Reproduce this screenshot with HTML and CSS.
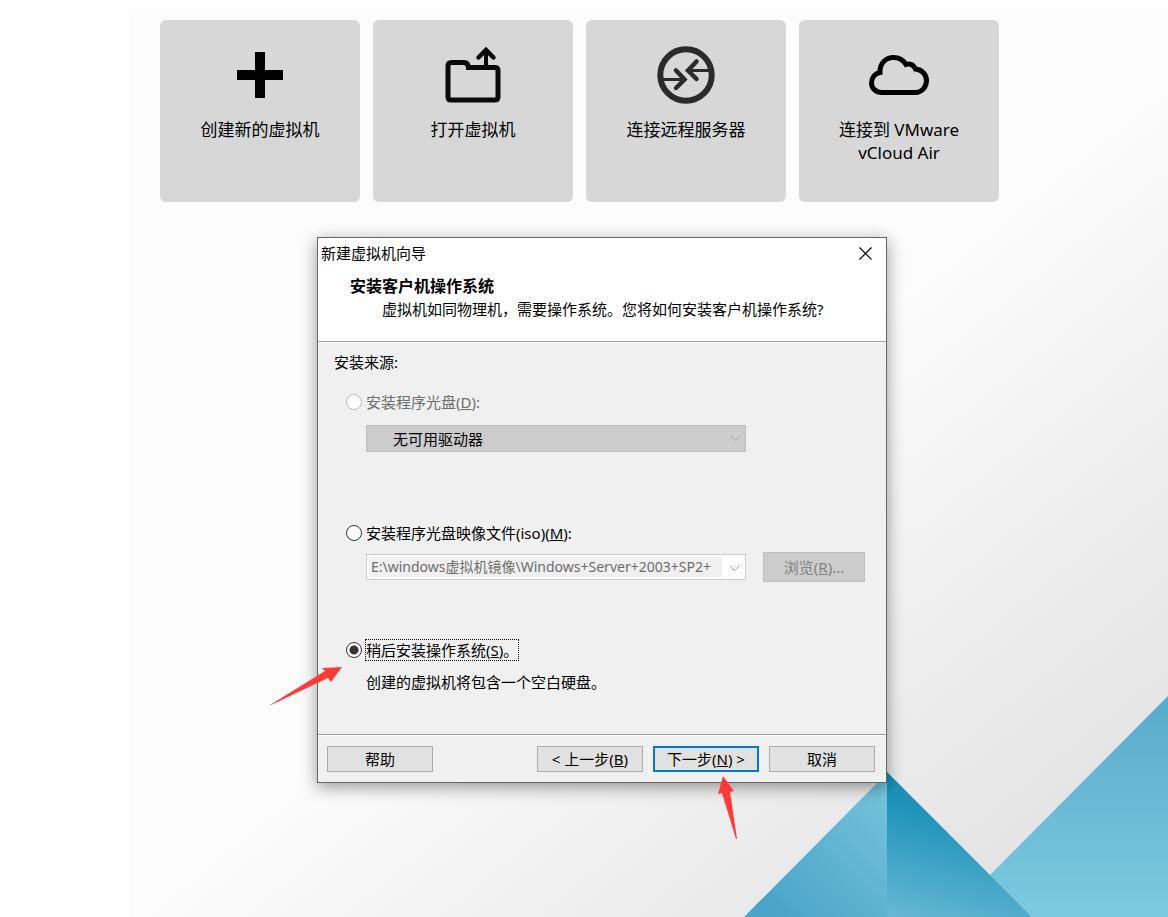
FILE: index.html
```html
<!DOCTYPE html>
<html lang="zh-CN">
<head>
    <meta charset="UTF-8">
    <title>新建虚拟机向导</title>
    <link rel="stylesheet" href="styles.css">
</head>
<body>
<div class="desktop">
    <svg class="bg" width="424" height="221" viewBox="0 0 424 221" aria-hidden="true">
        <defs>
            <linearGradient id="g1" x1="1" y1="0" x2="0" y2="1">
                <stop offset="0" stop-color="#78c5dc"/>
                <stop offset="0.9" stop-color="#4aa4c8"/>
            </linearGradient>
            <linearGradient id="g2" x1="0.35" y1="0" x2="0.1" y2="1">
                <stop offset="0.1" stop-color="#168db5"/>
                <stop offset="0.3" stop-color="#2294bb"/>
                <stop offset="1" stop-color="#65b7d4"/>
            </linearGradient>
            <linearGradient id="g3" x1="0" y1="0" x2="0" y2="1">
                <stop offset="0" stop-color="#57abcb"/>
                <stop offset="1" stop-color="#7dcae0"/>
            </linearGradient>
        </defs>
        <polygon points="424,0 246,179 288,221 424,221" fill="url(#g3)"/>
        <polygon points="0,221 144,76 144,221" fill="url(#g1)"/>
        <polygon points="143,76 288,221 143,221" fill="url(#g2)"/>
    </svg>

    <div class="cards">
        <button type="button" class="card">
            <svg width="60" height="60" viewBox="0 0 60 60"><path d="M30 7v46M7 30h46" stroke="#000" stroke-width="10"/></svg>
            <span>创建新的虚拟机</span>
        </button>
        <button type="button" class="card">
            <svg width="60" height="60" viewBox="0 0 60 60" fill="none" stroke="#0a0a0a" stroke-width="5">
                <path d="M23 22.5H52q3 0 3 3V52q0 3-3 3H8q-3 0-3-3V21q0-3.500 3.500-3.500H21q4 0 4.500 5"/>
                <path d="M43 21V5" stroke-width="4"/>
                <path d="M35.500 12.500L43 5l7.500 7.500" stroke-width="4.500" stroke-linecap="round"/>
            </svg>
            <span>打开虚拟机</span>
        </button>
        <button type="button" class="card">
            <svg width="60" height="60" viewBox="0 0 60 60" fill="none" stroke="#2b2b2b">
                <circle cx="30" cy="30" r="25.700" stroke-width="6"/>
                <path d="M6 34.500h22M54 25.500H32" stroke-width="3"/>
                <path d="M20 25.500l8.500 9-8.500 8.500M40.500 16.500l-8.500 9 8.500 8.500" stroke-width="4.500" stroke-linecap="round"/>
            </svg>
            <span>连接远程服务器</span>
        </button>
        <button type="button" class="card">
            <svg width="60" height="60" viewBox="0 0 60 60" fill="none" stroke="#000" stroke-width="5">
                <path d="M13 47.500C6.500 47.500 2.500 43 2.500 38c0-5.500 3.500-9.500 8.500-10.500C10.500 18 17 12.500 24.500 12.500c6 0 10 3 12.500 7 4.500-1.500 7.500 .500 9.500 4.500 6.500 .500 11 5.500 11 11.500 0 7-5 12-11 12z"/>
            </svg>
            <span>连接到 VMware<br>vCloud Air</span>
        </button>
    </div>

    <form class="dialog">
        <div class="titlebar">
            <span>新建虚拟机向导</span>
            <button type="button" class="close" aria-label="关闭">
                <svg width="13" height="13" viewBox="0 0 13 13"><path d="M.5 .5l12 12M12.500 .500l-12 12" stroke="#000" stroke-width="1.200"/></svg>
            </button>
        </div>
        <div class="header">
            <h1>安装客户机操作系统</h1>
            <p>虚拟机如同物理机，需要操作系统。您将如何安装客户机操作系统?</p>
        </div>

        <div class="content">
            <p class="source">安装来源:</p>

            <div class="option">
                <input type="radio" name="source" id="disc" disabled>
                <label for="disc">安装程序光盘(<u>D</u>):</label>
            </div>
            <div class="field drive">
                <div class="combo">
                    <select aria-label="安装程序光盘" disabled>
                        <option>无可用驱动器</option>
                    </select>
                    <svg class="chevron" width="11" height="7" viewBox="0 0 11 7"><path d="M1 1l4.500 4.500L10 1"/></svg>
                </div>
            </div>

            <div class="option">
                <input type="radio" name="source" id="iso">
                <label for="iso">安装程序光盘映像文件(iso)(<u>M</u>):</label>
            </div>
            <div class="field file">
                <div class="combo path">
                    <input type="text" aria-label="映像文件" value="E:\windows虚拟机镜像\Windows+Server+2003+SP2+" disabled>
                    <svg class="chevron" width="11" height="7" viewBox="0 0 11 7"><path d="M1 1l4.500 4.500L10 1"/></svg>
                </div>
                <button type="button" class="browse" disabled>浏览(<u>R</u>)...</button>
            </div>

            <div class="option">
                <input type="radio" name="source" id="later" checked>
                <label for="later" class="focus">稍后安装操作系统(<u>S</u>)。</label>
            </div>
            <p class="note">创建的虚拟机将包含一个空白硬盘。</p>
        </div>

        <div class="footer">
            <button type="button" class="btn help">帮助</button>
            <button type="button" class="btn">&lt; 上一步(<u>B</u>)</button>
            <button type="button" class="btn next">下一步(<u>N</u>) &gt;</button>
            <button type="button" class="btn">取消</button>
        </div>

        <svg class="arrow arrow-left" width="72" height="38" viewBox="0 0 72 38"><polygon points="0,38 55,4 52,1 72,0 61,15 58,11 1,38"/></svg>
        <svg class="arrow arrow-up" width="19" height="63" viewBox="0 0 19 63"><polygon points="5,0 16,15 12,16 19,63 18,63 4,17 0,18"/></svg>
    </form>
</div>
</body>
</html>
```

FILE: styles.css
```css
* {
    margin: 0;
    padding: 0;
    box-sizing: border-box;
}

body {
    padding: 10px 0 0 129px;
    background: #fff;
    font-family: "Noto Sans", "Noto Sans CJK SC", sans-serif;
    font-size: 15px;
    line-height: 20px;
    color: #000;
}

button, input, select {
    font: inherit;
    color: inherit;
}

.desktop {
    position: relative;
    min-height: calc(100vh - 10px);
    padding: 10px 31px 0;
    background: linear-gradient(141deg, #fcfcfc 52%, #ececec 76%, #e3e3e3 92%);
}

.bg {
    position: absolute;
    right: 0;
    bottom: 0;
}

/* 首页卡片 */
.cards {
    display: flex;
    flex-wrap: wrap;
    gap: 13px;
}

.card {
    display: flex;
    flex-direction: column;
    align-items: center;
    justify-content: flex-start;
    gap: 13px;
    width: 200px;
    min-height: 182px;
    padding: 25px 10px 20px;
    border: 0;
    border-radius: 6px;
    background: #d7d7d7;
    font-size: 17px;
    line-height: 23px;
}

/* 向导窗口 */
.dialog {
    position: relative;
    width: 570px;
    margin: 35px 0 0 157px;
    border: 1px solid #666;
    background: #f0f0f0;
    box-shadow: 0 4px 16px rgba(0, 0, 0, 0.4);
}

.titlebar {
    display: flex;
    justify-content: space-between;
    align-items: center;
    height: 30px;
    padding: 0 14px 0 3px;
    background: #fff;
}

.close {
    display: flex;
    border: 0;
    background: none;
}

.header {
    padding: 7px 32px 20px;
    border-bottom: 1px solid #a0a0a0;
    background: #fff;
    line-height: 23px;
}

.header h1 {
    font-size: 16px;
}

.header p {
    padding-left: 32px;
}

.content {
    padding: 9px 16px 42px;
    border-top: 1px solid #fff;
}

.option {
    display: flex;
    align-items: center;
    gap: 4px;
    padding-left: 12px;
}

.source {
    margin-bottom: 20px;
}

.option input {
    appearance: none;
    width: 16px;
    height: 16px;
    border: 1px solid #333;
    border-radius: 50%;
    background: #fff;
}

.option input:checked {
    background: radial-gradient(circle, #333 4px, #fff 5px);
}

.option input:disabled {
    border-color: #bcbcbc;
}

.option input:disabled + label {
    color: #6d6d6d;
}

.focus {
    outline: 1px dotted #000;
}

.field {
    display: flex;
    align-items: center;
    gap: 17px;
    padding-left: 32px;
}

.drive {
    margin: 13px 0 71px;
}

.file {
    margin: 9px 0 58px;
}

.combo {
    position: relative;
    width: 380px;
}

.combo select {
    display: block;
    appearance: none;
    width: 100%;
    height: 27px;
    padding: 0 26px;
    border: 1px solid #bfbfbf;
    background: #ccc;
    opacity: 1;
}

.chevron {
    position: absolute;
    right: 5px;
    top: 10px;
    fill: none;
    stroke: #a6a6a6;
}

.path {
    height: 26px;
    padding: 2px 23px 2px 2px;
    border: 1px solid #ccc;
    background: #fff;
}

.path input {
    display: block;
    width: 100%;
    height: 20px;
    padding-left: 2px;
    border: 0;
    background: #f0f0f0;
    color: #6d6d6d;
    font-size: 14px;
}

.browse {
    width: 102px;
    height: 30px;
    border: 1px solid #bfbfbf;
    background: #ccc;
    color: #838383;
}

.note {
    margin-top: 12px;
    padding-left: 32px;
}

.footer {
    display: flex;
    gap: 10px;
    padding: 11px 11px 10px 9px;
    border-top: 1px solid #a0a0a0;
    box-shadow: inset 0 1px #fff;
}

.btn {
    width: 106px;
    height: 26px;
    border: 1px solid #adadad;
    background: #e1e1e1;
}

.help {
    margin-right: auto;
}

.next {
    border: 2px solid #0078d7;
}

/* 红色提示箭头 */
.arrow {
    position: absolute;
    fill: #ff3b38;
}

.arrow-left {
    left: -48px;
    top: 429px;
}

.arrow-up {
    left: 400px;
    top: 538px;
}
```
